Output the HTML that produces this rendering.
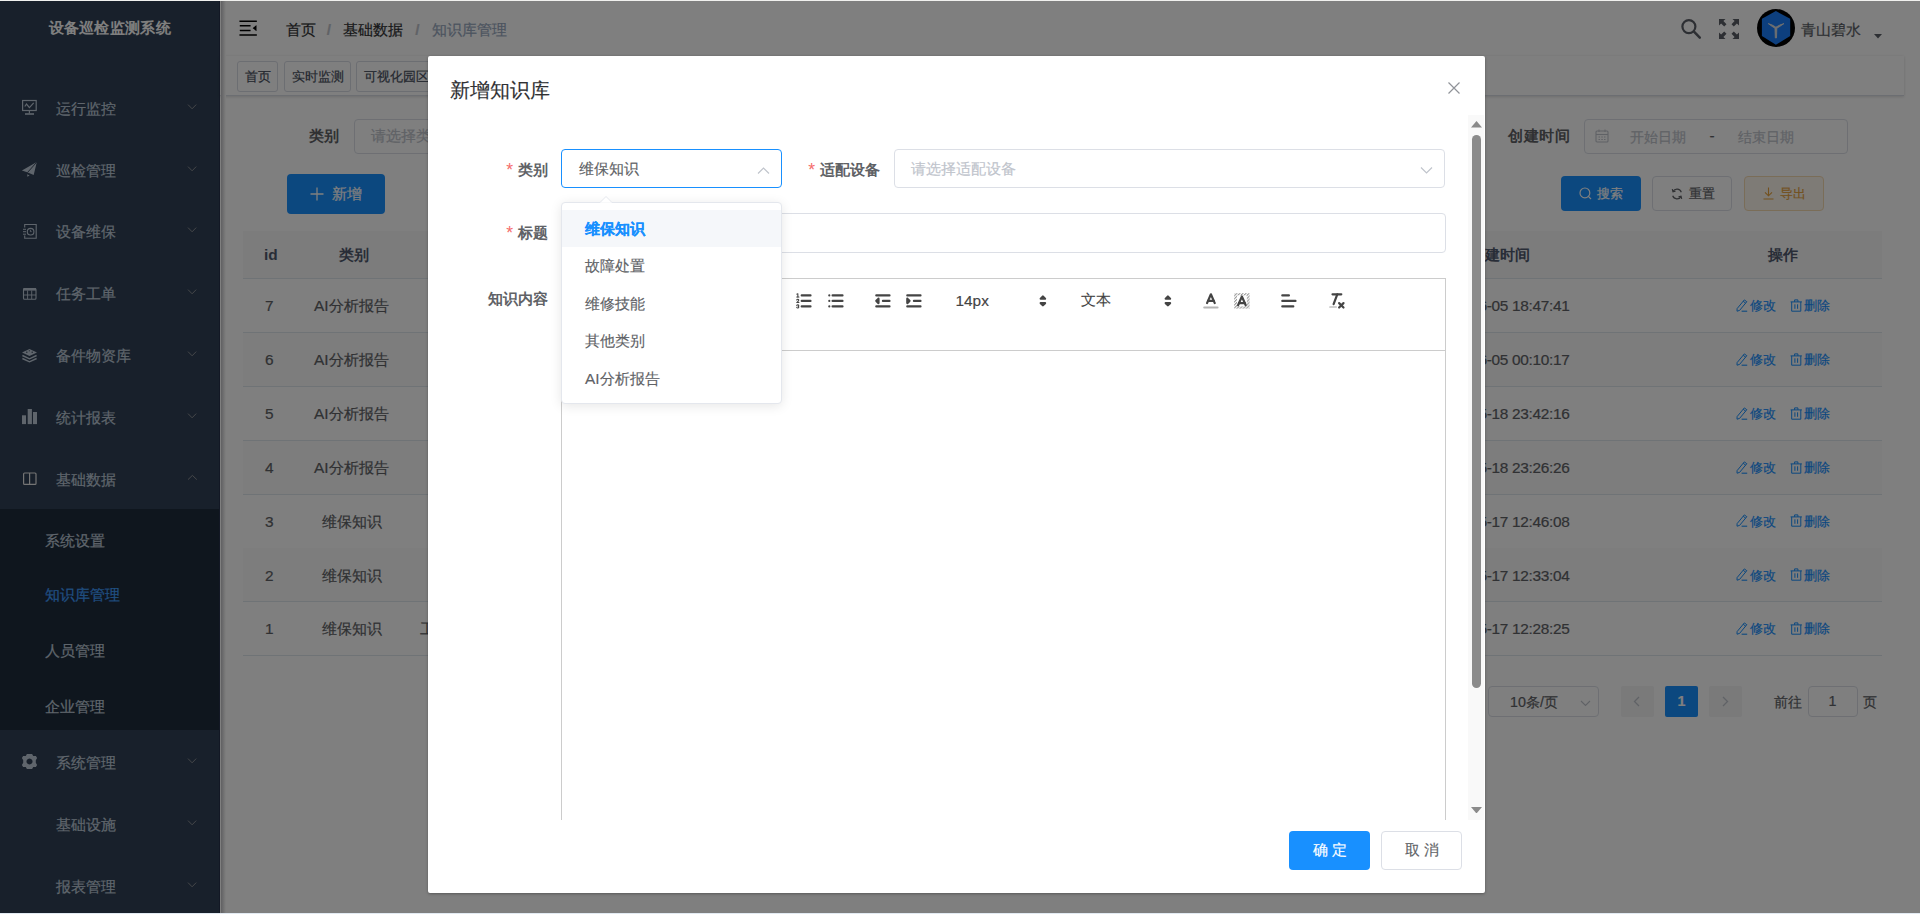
<!DOCTYPE html>
<html><head><meta charset="utf-8">
<style>
*{box-sizing:border-box;margin:0;padding:0}
html,body{width:1920px;height:914px;overflow:hidden;background:#fff;font-family:"Liberation Sans",sans-serif;color:#606266}
.a{position:absolute}
.t{position:absolute;white-space:nowrap;line-height:1}
/* sidebar */
#sb{position:absolute;left:0;top:0;width:220px;height:914px;background:#304156}
#sb .sub{position:absolute;left:0;top:509px;width:220px;height:221px;background:#1f2d3d}
#sb .mi{position:absolute;left:56px;font-size:15.4px;color:#bfcbd9;line-height:20px;height:20px}
#sb .si{position:absolute;left:45px;font-size:15.4px;color:#bfcbd9;line-height:20px;height:20px}
#sb .ic{position:absolute;left:22px}
#sb .chev{position:absolute;left:186px}
/* header */
#hd{position:absolute;left:220px;top:0;width:1700px;height:56px;background:#fff}
#tags{position:absolute;left:220px;top:56px;width:1684px;height:40px;background:#fff;border-bottom:1px solid #d8dce5;box-shadow:0 1px 3px 0 rgba(0,0,0,.12),0 0 3px 0 rgba(0,0,0,.04)}
.tag{position:absolute;top:5.3px;height:31px;border:1px solid #d8dce5;border-radius:3px;font-size:13.2px;color:#495060;line-height:30px;text-align:center;white-space:nowrap;background:#fff}
/* main */
.lbl{position:absolute;font-size:15.4px;font-weight:bold;color:#606266;line-height:20px}
.inp{position:absolute;border:1px solid #dcdfe6;border-radius:4px;background:#fff}
.ph{position:absolute;font-size:15.4px;color:#c0c4cc;line-height:20px;white-space:nowrap}
.btn{position:absolute;border-radius:4px;font-size:15.4px;line-height:20px;text-align:center;white-space:nowrap}
.row{position:absolute;left:243px;width:1639px;height:54px;border-bottom:1px solid #dfe6ec;background:#fff}
.row.st{background:#fafafa}
.cell{position:absolute;font-size:15.4px;color:#606266;line-height:20px;white-space:nowrap}
#pg{-webkit-text-stroke-width:0.2px}
#pg .lbl{-webkit-text-stroke-width:0}
#dlg{-webkit-text-stroke-width:0.15px}
#dlg .dl{-webkit-text-stroke-width:0}
#ovl{position:absolute;left:0;top:0;width:1920px;height:914px;background:rgba(0,0,0,.5)}
/* dialog */
#dlg{position:absolute;left:428px;top:56px;width:1057px;height:837px;background:#fff;border-radius:2px;box-shadow:0 1px 3px rgba(0,0,0,.3)}
.dl{position:absolute;font-size:15.4px;font-weight:bold;color:#606266;line-height:20px;white-space:nowrap}
.req{color:#f56c6c;font-weight:normal;margin-right:4.5px;font-size:17.5px;position:relative;top:1px}
.dd-item{position:absolute;left:0;width:218px;height:37.4px;font-size:15.4px;color:#606266;line-height:37.4px;padding-left:22.7px;white-space:nowrap}
</style></head><body>

<div id="pg">
<!-- SIDEBAR -->
<div id="sb">
  <div class="t" style="left:48.5px;top:20px;font-size:15.4px;font-weight:bold;color:#fff;letter-spacing:0.3px;-webkit-text-stroke-width:0;">设备巡检监测系统</div>
  <div class="sub"></div>
  <div class="mi" style="top:98.9px">运行监控</div>
  <svg class="chev" style="top:102.9px;left:187.2px" width="11" height="8" viewBox="0 0 11 8"><path d="M1 1.6 L5.1 5.8 L9.2 1.6" fill="none" stroke="#8b8e94" stroke-width="1"/></svg>
  <div class="mi" style="top:160.5px">巡检管理</div>
  <svg class="chev" style="top:164.5px;left:187.2px" width="11" height="8" viewBox="0 0 11 8"><path d="M1 1.6 L5.1 5.8 L9.2 1.6" fill="none" stroke="#8b8e94" stroke-width="1"/></svg>
  <div class="mi" style="top:222.0px">设备维保</div>
  <svg class="chev" style="top:226.0px;left:187.2px" width="11" height="8" viewBox="0 0 11 8"><path d="M1 1.6 L5.1 5.8 L9.2 1.6" fill="none" stroke="#8b8e94" stroke-width="1"/></svg>
  <div class="mi" style="top:284.0px">任务工单</div>
  <svg class="chev" style="top:288.0px;left:187.2px" width="11" height="8" viewBox="0 0 11 8"><path d="M1 1.6 L5.1 5.8 L9.2 1.6" fill="none" stroke="#8b8e94" stroke-width="1"/></svg>
  <div class="mi" style="top:346.0px">备件物资库</div>
  <svg class="chev" style="top:350.0px;left:187.2px" width="11" height="8" viewBox="0 0 11 8"><path d="M1 1.6 L5.1 5.8 L9.2 1.6" fill="none" stroke="#8b8e94" stroke-width="1"/></svg>
  <div class="mi" style="top:408.0px">统计报表</div>
  <svg class="chev" style="top:412.0px;left:187.2px" width="11" height="8" viewBox="0 0 11 8"><path d="M1 1.6 L5.1 5.8 L9.2 1.6" fill="none" stroke="#8b8e94" stroke-width="1"/></svg>
  <div class="mi" style="top:470.0px">基础数据</div>
  <svg class="chev" style="top:474.0px;left:187.2px" width="11" height="8" viewBox="0 0 11 8"><path d="M1 5.6 L5.4 1.4 L9.8 5.6" fill="none" stroke="#8b8e94" stroke-width="1"/></svg>
  <div class="si" style="top:530.7px;color:#bfcbd9">系统设置</div>
  <div class="si" style="top:585.0px;color:#409eff">知识库管理</div>
  <div class="si" style="top:641.4px;color:#bfcbd9">人员管理</div>
  <div class="si" style="top:696.6px;color:#bfcbd9">企业管理</div>
  <div class="mi" style="top:753.0px">系统管理</div>
  <svg class="chev" style="top:757.0px;left:187.2px" width="11" height="8" viewBox="0 0 11 8"><path d="M1 1.6 L5.1 5.8 L9.2 1.6" fill="none" stroke="#8b8e94" stroke-width="1"/></svg>
  <div class="mi" style="top:815.0px">基础设施</div>
  <svg class="chev" style="top:819.0px;left:187.2px" width="11" height="8" viewBox="0 0 11 8"><path d="M1 1.6 L5.1 5.8 L9.2 1.6" fill="none" stroke="#8b8e94" stroke-width="1"/></svg>
  <div class="mi" style="top:877.0px">报表管理</div>
  <svg class="chev" style="top:881.0px;left:187.2px" width="11" height="8" viewBox="0 0 11 8"><path d="M1 1.6 L5.1 5.8 L9.2 1.6" fill="none" stroke="#8b8e94" stroke-width="1"/></svg>
  <svg class="a" style="left:0;top:0" width="220" height="914" viewBox="0 0 220 914" fill="none" stroke="#bfcbd9">
    <!-- monitor -->
    <rect x="22.6" y="100.5" width="13.6" height="10" stroke-width="1.2"/>
    <polyline points="24.8,106.5 26.5,104 29.4,107.6 33.7,102.9" stroke-width="1.2"/>
    <line x1="29.4" y1="110.5" x2="29.4" y2="113.5" stroke-width="1.2"/>
    <line x1="25" y1="114" x2="34" y2="114" stroke-width="1.6"/>
    <!-- paper plane -->
    <path d="M36.8 162.1 L21.9 170.5 L27.2 172.3 L33.7 175 Z M27.2 172.3 L36.8 162.1" fill="#bfcbd9" stroke="none"/>
    <path d="M36.8 162.1 L27.5 172.5" stroke="#304156" stroke-width="0.9"/>
    <path d="M27.2 174.2 L29.6 175.4 L27.4 176.8 Z" fill="#bfcbd9" stroke="none"/>
    <!-- notebook clock -->
    <path d="M24.7 227.5 V224.5 H36.2 V238.2 H24.7 V235.5" stroke-width="1.1"/>
    <line x1="23" y1="229.3" x2="26" y2="229.3" stroke-width="1"/>
    <line x1="23" y1="231.7" x2="26" y2="231.7" stroke-width="1"/>
    <line x1="23" y1="234.2" x2="26" y2="234.2" stroke-width="1"/>
    <circle cx="30.6" cy="231.7" r="3.3" stroke-width="1.1"/>
    <path d="M30.4 229.8 V231.6 H31.6" stroke-width="0.9"/>
    <!-- table -->
    <rect x="23.5" y="288.5" width="12.5" height="10.8" rx="1" stroke-width="1.1"/>
    <rect x="23.5" y="288" width="12.5" height="2.6" fill="#bfcbd9" stroke="none"/>
    <line x1="23.5" y1="295" x2="36" y2="295" stroke-width="0.9"/>
    <line x1="27.6" y1="290.5" x2="27.6" y2="299" stroke-width="0.9"/>
    <line x1="31.7" y1="290.5" x2="31.7" y2="299" stroke-width="0.9"/>
    <!-- layers -->
    <path d="M29.5 349 L37 352.4 L29.5 356 L22 352.4 Z" fill="#bfcbd9" stroke="none"/>
    <path d="M22.4 355.5 L29.5 358.8 L36.6 355.5" stroke-width="1.4"/>
    <path d="M22.4 358.5 L29.5 361.8 L36.6 358.5" stroke-width="1.4"/>
    <path d="M26 352.2 h1.5 M31.5 352.2 h1.5 M29.3 350.3 v1" stroke="#304156" stroke-width="1"/>
    <!-- bars -->
    <rect x="22" y="415.3" width="4" height="8.8" fill="#bfcbd9" stroke="none"/>
    <rect x="27.7" y="409" width="4.2" height="15.1" fill="#bfcbd9" stroke="none"/>
    <rect x="33" y="412" width="4" height="12.1" fill="#bfcbd9" stroke="none"/>
    <!-- columns -->
    <rect x="23.6" y="473" width="12.4" height="11.4" rx="1" stroke-width="1.2" stroke="#e8e8e8"/>
    <line x1="29.6" y1="473" x2="29.6" y2="484.4" stroke-width="1.2" stroke="#e8e8e8"/>
  </svg>
  <svg class="a" style="left:21px;top:753px" width="17" height="17" viewBox="-8.5 -8.5 17 17">
    <path fill="#bfcbd9" fill-rule="evenodd" d="M-2.6 -7.4 L2.6 -7.4 L3.7 -5.4 L6.4 -5.4 L7.6 -3.5 L6.3 -1.3 L6.3 1.3 L7.6 3.5 L6.4 5.4 L3.7 5.4 L2.6 7.4 L-2.6 7.4 L-3.7 5.4 L-6.4 5.4 L-7.6 3.5 L-6.3 1.3 L-6.3 -1.3 L-7.6 -3.5 L-6.4 -5.4 L-3.7 -5.4 Z M0 -3 A3 3 0 1 0 0.01 -3 Z"/>
  </svg>
</div>

<!-- HEADER -->
<div id="hd">
  <div class="a" style="left:0;top:0;width:1700px;height:1px;background:#ccc"></div>
</div>
<svg class="a" style="left:236.8px;top:16.7px;transform:rotate(180deg)" width="22.3" height="22.3" viewBox="0 0 1024 1024"><path fill="#000" d="M408 442h480c4.4 0 8-3.6 8-8v-56c0-4.4-3.6-8-8-8H408c-4.4 0-8 3.6-8 8v56c0 4.4 3.6 8 8 8zm-8 204c0 4.4 3.6 8 8 8h480c4.4 0 8-3.6 8-8v-56c0-4.4-3.6-8-8-8H408c-4.4 0-8 3.6-8 8v56zm504-486H120c-4.4 0-8 3.6-8 8v56c0 4.4 3.6 8 8 8h784c4.4 0 8-3.6 8-8v-56c0-4.4-3.6-8-8-8zm0 632H120c-4.4 0-8 3.6-8 8v56c0 4.4 3.6 8 8 8h784c4.4 0 8-3.6 8-8v-56c0-4.4-3.6-8-8-8zM142.4 642.1L298.7 519a8.840 8.840 0 0 0 0-13.900L142.4 381.900c-5.800-4.600-14.400-.500-14.400 6.900v246.300a8.900 8.900 0 0 0 14.400 7z"/></svg>
<div class="t" style="left:285.5px;top:21.5px;font-size:15.4px;color:#303133">首页</div>
<div class="t" style="left:326.8px;top:21.5px;font-size:15.4px;color:#c0c4cc;font-weight:bold">/</div>
<div class="t" style="left:343.2px;top:21.5px;font-size:15.4px;color:#303133">基础数据</div>
<div class="t" style="left:415.2px;top:21.5px;font-size:15.4px;color:#c0c4cc;font-weight:bold">/</div>
<div class="t" style="left:431.5px;top:21.5px;font-size:15.4px;color:#97a8be">知识库管理</div>
<svg class="a" style="left:1678px;top:16px" width="26" height="26" viewBox="0 0 26 26">
  <circle cx="10.9" cy="10.6" r="6.5" fill="none" stroke="#5a5e66" stroke-width="2.2"/>
  <line x1="16.2" y1="15.9" x2="21.8" y2="21.6" stroke="#5a5e66" stroke-width="2.5" stroke-linecap="round"/>
</svg>
<svg class="a" style="left:1719px;top:18.8px" width="20" height="20" viewBox="0 0 20 20" fill="#5a5e66">
  <path d="M0 0 H6.5 L4.4 2.1 L7.5 5.2 L5.2 7.5 L2.1 4.4 L0 6.5 Z"/>
  <path d="M20 0 H13.5 L15.6 2.1 L12.5 5.2 L14.8 7.5 L17.9 4.4 L20 6.5 Z"/>
  <path d="M0 20 H6.5 L4.4 17.9 L7.5 14.8 L5.2 12.5 L2.1 15.6 L0 13.5 Z"/>
  <path d="M20 20 H13.5 L15.6 17.9 L12.5 14.8 L14.8 12.5 L17.9 15.6 L20 13.5 Z"/>
</svg>
<svg class="a" style="left:1757px;top:9px" width="38" height="38" viewBox="0 0 38 38">
  <circle cx="19" cy="19" r="19" fill="#000"/>
  <polygon points="18.9,2 33.2,9.8 33.2,27 18.9,35.8 4.9,27 4.9,9.8" fill="#1a7efc"/>
  <path d="M11.3 14.6 Q15.5 15.8 18.9 18.2 Q22.5 15.8 26.9 14.6 Q23 17.5 19.8 19.2 L19.5 28.9 L18.3 28.9 L18 19.2 Q14.8 17.5 11.3 14.6 Z" fill="#e0e0e0" stroke="#e0e0e0" stroke-width="0.9" stroke-linejoin="round"/>
</svg>
<div class="t" style="left:1801px;top:22px;font-size:15.4px;color:#5a5e66">青山碧水</div>
<svg class="a" style="left:1874px;top:33.5px" width="8" height="5" viewBox="0 0 8 5"><polygon points="0,0 8,0 4,4.5" fill="#5a5e66"/></svg>
<div id="tags">
  <div class="tag" style="left:17.4px;width:41px">首页</div>
  <div class="tag" style="left:64.4px;width:67px">实时监测</div>
  <div class="tag" style="left:136.4px;width:80px">可视化园区</div>
</div>
<div class="a" style="left:219px;top:0;width:1px;height:914px;background:#26304a"></div>
<div class="a" style="left:221px;top:0;width:5px;height:914px;background:linear-gradient(to right,#c0c0c4,#fff)"></div>

<!-- MAIN -->
<div id="main">
  <div class="lbl" style="left:309px;top:126px">类别</div>
  <div class="inp" style="left:353.5px;top:119px;width:250px;height:35px"></div>
  <div class="ph" style="left:370.5px;top:126px">请选择类别</div>
  <div class="btn" style="left:287px;top:174px;width:98px;height:40px;background:#1890ff;color:#fff;line-height:40px"><svg width="14" height="14" viewBox="0 0 14 14" style="vertical-align:-2px;margin-right:8px"><path d="M7 0.5 V13.5 M0.5 7 H13.5" stroke="#fff" stroke-width="1.3"/></svg>新增</div>

  <div class="lbl" style="left:1508px;top:126px;letter-spacing:0.5px">创建时间</div>
  <div class="inp" style="left:1583.5px;top:119px;width:264px;height:35px"></div>
  <svg class="a" style="left:1595px;top:129px" width="14" height="14" viewBox="0 0 14 14" fill="none" stroke="#c0c4cc" stroke-width="1.1"><rect x="1" y="2" width="12" height="11" rx="1"/><line x1="1" y1="5.5" x2="13" y2="5.5"/><line x1="4" y1="0.5" x2="4" y2="3"/><line x1="10" y1="0.5" x2="10" y2="3"/><path d="M3.5 8h1.5M6.3 8h1.5M9 8h1.5M3.5 10.5h1.5M6.3 10.5h1.5M9 10.5h1.5"/></svg>
  <div class="ph" style="left:1629.5px;top:126.5px;font-size:14.3px">开始日期</div>
  <div class="ph" style="left:1709.5px;top:126px;color:#606266">-</div>
  <div class="ph" style="left:1738px;top:126.5px;font-size:14.3px">结束日期</div>

  <div class="btn" style="left:1561px;top:176px;width:80px;height:35px;background:#1890ff;"></div>
  <svg class="a" style="left:1578.5px;top:187.2px" width="13" height="13" viewBox="0 0 13 13"><circle cx="5.9" cy="5.9" r="4.9" fill="none" stroke="#fff" stroke-width="1.2"/><line x1="9.4" y1="9.4" x2="12" y2="12" stroke="#fff" stroke-width="1.2"/></svg>
  <div class="t" style="left:1597px;top:186.5px;font-size:13.2px;color:#fff">搜索</div>
  <div class="btn" style="left:1652px;top:176px;width:80px;height:35px;background:#fff;border:1px solid #dcdfe6;"></div>
  <svg class="a" style="left:1670.5px;top:187.5px" width="12" height="12" viewBox="0 0 12 12" fill="none" stroke="#606266" stroke-width="1.2"><path d="M10.3 4.2 A4.6 4.6 0 0 0 2 3.4"/><path d="M1.7 7.8 A4.6 4.6 0 0 0 10 8.6"/><path d="M1.3 1.2 L2 3.8 L4.5 3.2"/><path d="M10.7 10.8 L10 8.2 L7.5 8.8"/></svg>
  <div class="t" style="left:1688.5px;top:186.5px;font-size:13.2px;color:#606266">重置</div>
  <div class="btn" style="left:1744px;top:176px;width:80px;height:35px;background:#fdf6ec;border:1px solid #f5dab1;"></div>
  <svg class="a" style="left:1762.5px;top:186.5px" width="11" height="13" viewBox="0 0 11 13" fill="none" stroke="#e6a23c" stroke-width="1.1"><path d="M5.5 0.5 V8.6 M2 5.3 L5.5 8.8 L9 5.3 M0.5 12 H10.5"/></svg>
  <div class="t" style="left:1779.5px;top:186.5px;font-size:13.2px;color:#e6a23c">导出</div>

  <div class="a" style="left:243px;top:231px;width:1639px;height:48px;background:#f8f8f9;border-bottom:1px solid #dfe6ec"></div>
  <div class="lbl" style="left:264px;top:245px;color:#515a6e">id</div>
  <div class="lbl" style="left:339px;top:245px;color:#515a6e">类别</div>
  <div class="lbl" style="left:1470px;top:245px;color:#515a6e">创建时间</div>
  <div class="lbl" style="left:1768px;top:245px;color:#515a6e">操作</div>
  <div class="row" style="top:279.20px"></div>
  <div class="cell" style="left:265px;top:296.2px">7</div>
  <div class="cell" style="left:314.0px;top:296.2px">AI分析报告</div>
  <div class="cell" style="right:350.5px;top:296.2px;letter-spacing:-0.3px">2024-06-05 18:47:41</div>
  <svg class="a" style="left:1736px;top:298.9px" width="12" height="13" viewBox="0 0 12 13" fill="none" stroke="#1890ff" stroke-width="1"><path d="M8.3 0.9 L10.8 2.7 L3.6 11.4 L1 12.2 L1.1 9.6 Z"/><path d="M7.2 2.3 L9.6 4.1"/><path d="M5.6 12.2 H11.2" stroke-width="1.1"/></svg><div class="cell" style="left:1750.3px;top:296.2px;color:#1890ff;font-size:13.2px">修改</div><svg class="a" style="left:1790px;top:298.9px" width="12.5" height="13" viewBox="0 0 12.5 13" fill="none" stroke="#1890ff" stroke-width="1"><path d="M0.6 2.9 H11.9 M4.6 2.9 V0.9 H7.9 V2.9 M1.7 2.9 V12.2 H10.8 V2.9 M4.9 5.3 V9.8 M7.6 5.3 V9.8"/></svg><div class="cell" style="left:1804px;top:296.2px;color:#1890ff;font-size:13.2px">删除</div>
  <div class="row st" style="top:333.05px"></div>
  <div class="cell" style="left:265px;top:350.1px">6</div>
  <div class="cell" style="left:314.0px;top:350.1px">AI分析报告</div>
  <div class="cell" style="right:350.5px;top:350.1px;letter-spacing:-0.3px">2024-06-05 00:10:17</div>
  <svg class="a" style="left:1736px;top:352.8px" width="12" height="13" viewBox="0 0 12 13" fill="none" stroke="#1890ff" stroke-width="1"><path d="M8.3 0.9 L10.8 2.7 L3.6 11.4 L1 12.2 L1.1 9.6 Z"/><path d="M7.2 2.3 L9.6 4.1"/><path d="M5.6 12.2 H11.2" stroke-width="1.1"/></svg><div class="cell" style="left:1750.3px;top:350.1px;color:#1890ff;font-size:13.2px">修改</div><svg class="a" style="left:1790px;top:352.8px" width="12.5" height="13" viewBox="0 0 12.5 13" fill="none" stroke="#1890ff" stroke-width="1"><path d="M0.6 2.9 H11.9 M4.6 2.9 V0.9 H7.9 V2.9 M1.7 2.9 V12.2 H10.8 V2.9 M4.9 5.3 V9.8 M7.6 5.3 V9.8"/></svg><div class="cell" style="left:1804px;top:350.1px;color:#1890ff;font-size:13.2px">删除</div>
  <div class="row" style="top:386.90px"></div>
  <div class="cell" style="left:265px;top:403.9px">5</div>
  <div class="cell" style="left:314.0px;top:403.9px">AI分析报告</div>
  <div class="cell" style="right:350.5px;top:403.9px;letter-spacing:-0.3px">2024-05-18 23:42:16</div>
  <svg class="a" style="left:1736px;top:406.6px" width="12" height="13" viewBox="0 0 12 13" fill="none" stroke="#1890ff" stroke-width="1"><path d="M8.3 0.9 L10.8 2.7 L3.6 11.4 L1 12.2 L1.1 9.6 Z"/><path d="M7.2 2.3 L9.6 4.1"/><path d="M5.6 12.2 H11.2" stroke-width="1.1"/></svg><div class="cell" style="left:1750.3px;top:403.9px;color:#1890ff;font-size:13.2px">修改</div><svg class="a" style="left:1790px;top:406.6px" width="12.5" height="13" viewBox="0 0 12.5 13" fill="none" stroke="#1890ff" stroke-width="1"><path d="M0.6 2.9 H11.9 M4.6 2.9 V0.9 H7.9 V2.9 M1.7 2.9 V12.2 H10.8 V2.9 M4.9 5.3 V9.8 M7.6 5.3 V9.8"/></svg><div class="cell" style="left:1804px;top:403.9px;color:#1890ff;font-size:13.2px">删除</div>
  <div class="row st" style="top:440.75px"></div>
  <div class="cell" style="left:265px;top:457.8px">4</div>
  <div class="cell" style="left:314.0px;top:457.8px">AI分析报告</div>
  <div class="cell" style="right:350.5px;top:457.8px;letter-spacing:-0.3px">2024-05-18 23:26:26</div>
  <svg class="a" style="left:1736px;top:460.5px" width="12" height="13" viewBox="0 0 12 13" fill="none" stroke="#1890ff" stroke-width="1"><path d="M8.3 0.9 L10.8 2.7 L3.6 11.4 L1 12.2 L1.1 9.6 Z"/><path d="M7.2 2.3 L9.6 4.1"/><path d="M5.6 12.2 H11.2" stroke-width="1.1"/></svg><div class="cell" style="left:1750.3px;top:457.8px;color:#1890ff;font-size:13.2px">修改</div><svg class="a" style="left:1790px;top:460.5px" width="12.5" height="13" viewBox="0 0 12.5 13" fill="none" stroke="#1890ff" stroke-width="1"><path d="M0.6 2.9 H11.9 M4.6 2.9 V0.9 H7.9 V2.9 M1.7 2.9 V12.2 H10.8 V2.9 M4.9 5.3 V9.8 M7.6 5.3 V9.8"/></svg><div class="cell" style="left:1804px;top:457.8px;color:#1890ff;font-size:13.2px">删除</div>
  <div class="row" style="top:494.60px"></div>
  <div class="cell" style="left:265px;top:511.6px">3</div>
  <div class="cell" style="left:322.0px;top:511.6px">维保知识</div>
  <div class="cell" style="right:350.5px;top:511.6px;letter-spacing:-0.3px">2024-05-17 12:46:08</div>
  <svg class="a" style="left:1736px;top:514.3px" width="12" height="13" viewBox="0 0 12 13" fill="none" stroke="#1890ff" stroke-width="1"><path d="M8.3 0.9 L10.8 2.7 L3.6 11.4 L1 12.2 L1.1 9.6 Z"/><path d="M7.2 2.3 L9.6 4.1"/><path d="M5.6 12.2 H11.2" stroke-width="1.1"/></svg><div class="cell" style="left:1750.3px;top:511.6px;color:#1890ff;font-size:13.2px">修改</div><svg class="a" style="left:1790px;top:514.3px" width="12.5" height="13" viewBox="0 0 12.5 13" fill="none" stroke="#1890ff" stroke-width="1"><path d="M0.6 2.9 H11.9 M4.6 2.9 V0.9 H7.9 V2.9 M1.7 2.9 V12.2 H10.8 V2.9 M4.9 5.3 V9.8 M7.6 5.3 V9.8"/></svg><div class="cell" style="left:1804px;top:511.6px;color:#1890ff;font-size:13.2px">删除</div>
  <div class="row st" style="top:548.45px"></div>
  <div class="cell" style="left:265px;top:565.5px">2</div>
  <div class="cell" style="left:322.0px;top:565.5px">维保知识</div>
  <div class="cell" style="right:350.5px;top:565.5px;letter-spacing:-0.3px">2024-05-17 12:33:04</div>
  <svg class="a" style="left:1736px;top:568.2px" width="12" height="13" viewBox="0 0 12 13" fill="none" stroke="#1890ff" stroke-width="1"><path d="M8.3 0.9 L10.8 2.7 L3.6 11.4 L1 12.2 L1.1 9.6 Z"/><path d="M7.2 2.3 L9.6 4.1"/><path d="M5.6 12.2 H11.2" stroke-width="1.1"/></svg><div class="cell" style="left:1750.3px;top:565.5px;color:#1890ff;font-size:13.2px">修改</div><svg class="a" style="left:1790px;top:568.2px" width="12.5" height="13" viewBox="0 0 12.5 13" fill="none" stroke="#1890ff" stroke-width="1"><path d="M0.6 2.9 H11.9 M4.6 2.9 V0.9 H7.9 V2.9 M1.7 2.9 V12.2 H10.8 V2.9 M4.9 5.3 V9.8 M7.6 5.3 V9.8"/></svg><div class="cell" style="left:1804px;top:565.5px;color:#1890ff;font-size:13.2px">删除</div>
  <div class="row" style="top:602.30px"></div>
  <div class="cell" style="left:265px;top:619.3px">1</div>
  <div class="cell" style="left:322.0px;top:619.3px">维保知识</div>
  <div class="cell" style="right:350.5px;top:619.3px;letter-spacing:-0.3px">2024-05-17 12:28:25</div>
  <svg class="a" style="left:1736px;top:622.0px" width="12" height="13" viewBox="0 0 12 13" fill="none" stroke="#1890ff" stroke-width="1"><path d="M8.3 0.9 L10.8 2.7 L3.6 11.4 L1 12.2 L1.1 9.6 Z"/><path d="M7.2 2.3 L9.6 4.1"/><path d="M5.6 12.2 H11.2" stroke-width="1.1"/></svg><div class="cell" style="left:1750.3px;top:619.3px;color:#1890ff;font-size:13.2px">修改</div><svg class="a" style="left:1790px;top:622.0px" width="12.5" height="13" viewBox="0 0 12.5 13" fill="none" stroke="#1890ff" stroke-width="1"><path d="M0.6 2.9 H11.9 M4.6 2.9 V0.9 H7.9 V2.9 M1.7 2.9 V12.2 H10.8 V2.9 M4.9 5.3 V9.8 M7.6 5.3 V9.8"/></svg><div class="cell" style="left:1804px;top:619.3px;color:#1890ff;font-size:13.2px">删除</div>
  <div class="cell" style="left:420px;top:619px">工艺规范</div>

  <div class="inp" style="left:1488px;top:686px;width:110.5px;height:30.5px"></div>
  <div class="cell" style="left:1510px;top:692px;font-size:14.3px">10条/页</div>
  <svg class="a" style="left:1580px;top:699.6px" width="11" height="7" viewBox="0 0 11 7"><path d="M1 1 L5.5 5.5 L10 1" fill="none" stroke="#c0c4cc" stroke-width="1.1"/></svg>
  <div class="a" style="left:1620.7px;top:686px;width:33px;height:30.5px;background:#f4f4f5;border-radius:2px"></div>
  <svg class="a" style="left:1633px;top:696px" width="7" height="11" viewBox="0 0 7 11"><path d="M6 1 L1.5 5.5 L6 10" fill="none" stroke="#c0c4cc" stroke-width="1.3"/></svg>
  <div class="a" style="left:1665px;top:686px;width:33px;height:30.5px;background:#1890ff;border-radius:2px;color:#fff;font-size:14.3px;font-weight:bold;text-align:center;line-height:30.5px">1</div>
  <div class="a" style="left:1708.7px;top:686px;width:33.5px;height:30.5px;background:#f4f4f5;border-radius:2px"></div>
  <svg class="a" style="left:1722px;top:696px" width="7" height="11" viewBox="0 0 7 11"><path d="M1 1 L5.5 5.5 L1 10" fill="none" stroke="#c0c4cc" stroke-width="1.3"/></svg>
  <div class="cell" style="left:1774px;top:692px;font-size:14.3px">前往</div>
  <div class="inp" style="left:1807.5px;top:686px;width:50px;height:30.5px;text-align:center;font-size:14.3px;line-height:28px;color:#606266">1</div>
  <div class="cell" style="left:1863px;top:692px;font-size:14.3px">页</div>
</div>

</div>
<div id="ovl"></div>
<div class="a" style="left:0;top:0;width:1920px;height:1px;background:#f0f0ee"></div>
<div class="a" style="left:0;top:913px;width:1920px;height:1px;background:#e2eaf2"></div>

<!-- DIALOG -->
<div id="dlg">
  <div class="t" style="left:22px;top:25px;font-size:19.8px;color:#303133">新增知识库</div>
  <svg class="a" style="left:1020px;top:25.5px" width="12" height="12" viewBox="0 0 12 12"><path d="M0.5 0.5 L11.5 11.5 M11.5 0.5 L0.5 11.5" stroke="#909399" stroke-width="1.2"/></svg>
  <div class="a" style="left:0;top:60px;width:1057px;height:704px;overflow:hidden">
    <div class="dl" style="right:937.5px;top:43.0px"><span class="req">*</span>类别</div>
    <div class="dl" style="right:605.5px;top:43.0px"><span class="req">*</span>适配设备</div>
    <div class="dl" style="right:937.5px;top:106.3px"><span class="req">*</span>标题</div>
    <div class="dl" style="right:937.5px;top:172.7px">知识内容</div>
    <div class="inp" style="left:133.4px;top:33.3px;width:220.5px;height:38.8px;border-color:#1890ff"></div>
    <div class="t" style="left:150.5px;top:45.0px;font-size:15.4px;color:#606266;line-height:16px">维保知识</div>
    <svg class="a" style="left:328.5px;top:49.5px" width="13" height="9" viewBox="0 0 13 9"><path d="M1 7.5 L6.5 2 L12 7.5" fill="none" stroke="#c0c4cc" stroke-width="1.2"/></svg>
    <div class="inp" style="left:465.5px;top:33.3px;width:551.5px;height:38.8px"></div>
    <div class="t" style="left:482.5px;top:45.0px;font-size:15.4px;color:#c0c4cc;line-height:16px">请选择适配设备</div>
    <svg class="a" style="left:991.5px;top:50.0px" width="13" height="9" viewBox="0 0 13 9"><path d="M1 1.5 L6.5 7 L12 1.5" fill="none" stroke="#c0c4cc" stroke-width="1.2"/></svg>
    <div class="inp" style="left:133.4px;top:97.4px;width:884.5px;height:39.2px"></div>
    <div class="a" style="left:133.4px;top:162.4px;width:884.5px;height:72.5px;border:1px solid #ccc"></div>
    <div class="a" style="left:133.4px;top:234.4px;width:884.5px;height:600px;border:1px solid #ccc;border-top:0"></div>
  </div>
<svg class="a" style="left:366.4px;top:234.8px" width="19.8" height="19.8" viewBox="0 0 18 18"><g fill="none" stroke="#444" stroke-width="2" stroke-linecap="round" stroke-linejoin="round"><line x1="7" x2="15" y1="4" y2="4"/><line x1="7" x2="15" y1="9" y2="9"/><line x1="7" x2="15" y1="14" y2="14"/><line stroke-width="1" x1="2.5" x2="4.5" y1="5.5" y2="5.5"/><path stroke-width="1" d="M4.5,10.5h-2c0-.234,1.85-1.076,1.85-2.234A0.959,0.959,0,0,0,2.5,8.156"/><path stroke-width="1" d="M2.5,14.846a0.959,0.959,0,0,0,1.85-.109A0.7,0.7,0,0,0,3.75,14a0.688,0.688,0,0,0,.6-0.736,0.959,0.959,0,0,0-1.85-.109"/></g><path fill="#444" d="M3.5,6A0.5,0.5,0,0,1,3,5.5V3.085l-0.276.138A0.5,0.5,0,0,1,2.053,3c-0.124-.247-0.023-0.324.224-0.447l1-.5A0.5,0.5,0,0,1,4,2.5v3A0.5,0.5,0,0,1,3.5,6Z"/></svg>
<svg class="a" style="left:397.8px;top:234.8px" width="19.8" height="19.8" viewBox="0 0 18 18"><g fill="none" stroke="#444" stroke-width="2" stroke-linecap="round" stroke-linejoin="round"><line x1="6" x2="15" y1="4" y2="4"/><line x1="6" x2="15" y1="9" y2="9"/><line x1="6" x2="15" y1="14" y2="14"/><line x1="3" x2="3" y1="4" y2="4"/><line x1="3" x2="3" y1="9" y2="9"/><line x1="3" x2="3" y1="14" y2="14"/></g></svg>
<svg class="a" style="left:444.6px;top:234.8px" width="19.8" height="19.8" viewBox="0 0 18 18"><g fill="none" stroke="#444" stroke-width="2" stroke-linecap="round" stroke-linejoin="round"><line x1="3" x2="15" y1="14" y2="14"/><line x1="3" x2="15" y1="4" y2="4"/><line x1="9" x2="15" y1="9" y2="9"/><polyline fill="#444" points="5 7 5 11 3 9 5 7"/></g></svg>
<svg class="a" style="left:475.7px;top:234.8px" width="19.8" height="19.8" viewBox="0 0 18 18"><g fill="none" stroke="#444" stroke-width="2" stroke-linecap="round" stroke-linejoin="round"><line x1="3" x2="15" y1="14" y2="14"/><line x1="3" x2="15" y1="4" y2="4"/><line x1="9" x2="15" y1="9" y2="9"/><polyline fill="#444" points="3 7 3 11 5 9 3 7"/></g></svg>
  <div class="t" style="left:527.5px;top:236.5px;font-size:15.4px;color:#444;font-weight:500">14px</div>
<svg class="a" style="left:604.8px;top:234.8px" width="19.8" height="19.8" viewBox="0 0 18 18"><g fill="none" stroke="#444" stroke-width="2" stroke-linecap="round" stroke-linejoin="round"><polygon fill="#444" points="7 11 9 13 11 11 7 11"/><polygon fill="#444" points="7 7 9 5 11 7 7 7"/></g></svg>
  <div class="t" style="left:652.5px;top:236.0px;font-size:15.4px;color:#444">文本</div>
<svg class="a" style="left:729.8px;top:234.8px" width="19.8" height="19.8" viewBox="0 0 18 18"><g fill="none" stroke="#444" stroke-width="2" stroke-linecap="round" stroke-linejoin="round"><polygon fill="#444" points="7 11 9 13 11 11 7 11"/><polygon fill="#444" points="7 7 9 5 11 7 7 7"/></g></svg>
<svg class="a" style="left:773.2px;top:235.1px" width="19.8" height="19.8" viewBox="0 0 18 18"><g fill="none" stroke="#444" stroke-width="2" stroke-linecap="round" stroke-linejoin="round"><line opacity="0.4" x1="3" x2="15" y1="15" y2="15"/><polyline points="5.5 11 9 3 12.5 11"/><line x1="11.63" x2="6.38" y1="9" y2="9"/></g></svg>
<svg class="a" style="left:803.8px;top:234.8px" width="19.8" height="19.8" viewBox="0 0 18 18"><defs><pattern id="hp" width="2" height="2" patternUnits="userSpaceOnUse" patternTransform="rotate(45)"><rect width="1" height="2" fill="#444"/></pattern></defs><rect x="2" y="2" width="14" height="14" fill="url(#hp)" opacity="0.55"/><rect x="4.5" y="4" width="9" height="10" fill="#fff"/><g fill="none" stroke="#444" stroke-width="2" stroke-linecap="round" stroke-linejoin="round"><polyline points="5.5 13 9 5 12.5 13"/><line x1="11.63" x2="6.38" y1="11" y2="11"/></g></svg>
<svg class="a" style="left:850.8px;top:234.8px" width="19.8" height="19.8" viewBox="0 0 18 18"><g fill="none" stroke="#444" stroke-width="2" stroke-linecap="round" stroke-linejoin="round"><line x1="3" x2="15" y1="9" y2="9"/><line x1="3" x2="13" y1="14" y2="14"/><line x1="3" x2="9" y1="4" y2="4"/></g></svg>
<svg class="a" style="left:898.8px;top:234.8px" width="19.8" height="19.8" viewBox="0 0 18 18"><g fill="none" stroke="#444" stroke-width="2" stroke-linecap="round" stroke-linejoin="round"><line x1="5" x2="13" y1="3" y2="3"/><line x1="6" x2="9.35" y1="12" y2="3"/><line x1="11" x2="15" y1="11" y2="15"/><line x1="15" x2="11" y1="11" y2="15"/></g><rect fill="#444" opacity="0.5" height="1" rx="0.5" ry="0.5" width="7" x="2" y="14"/></svg>
  <div class="a" style="left:1040px;top:59.2px;width:15.7px;height:704.6px;background:#f9f9f9"></div>
  <svg class="a" style="left:1043px;top:65px" width="11" height="6.5" viewBox="0 0 11 6.5"><polygon points="5.5,0 11,6.5 0,6.5" fill="#8b8b8b"/></svg>
  <div class="a" style="left:1044.2px;top:79.1px;width:9px;height:552.9px;background:#8b8b8b;border-radius:4.5px"></div>
  <svg class="a" style="left:1043px;top:750.5px" width="11" height="6.5" viewBox="0 0 11 6.5"><polygon points="0,0 11,0 5.5,6.5" fill="#8b8b8b"/></svg>
  <div class="btn" style="left:861.3px;top:775.2px;width:80.7px;height:38.5px;background:#1890ff;color:#fff;line-height:38.5px;letter-spacing:0">确 定</div>
  <div class="btn" style="left:953.2px;top:775.2px;width:81.3px;height:38.5px;background:#fff;border:1px solid #dcdfe6;color:#606266;line-height:36.5px">取 消</div>
  <div class="a" style="left:133.4px;top:146.0px;width:220.5px;height:201.8px;background:#fff;border:1px solid #e4e7ed;border-radius:4px;box-shadow:0 2px 12px 0 rgba(0,0,0,.1)">
    <div class="a" style="left:0;top:7px;width:218.5px;height:37.2px;background:#f5f7fa"></div>
    <div class="dd-item" style="top:7.0px;color:#1890ff;font-weight:bold;">维保知识</div>
    <div class="dd-item" style="top:44.4px;">故障处置</div>
    <div class="dd-item" style="top:81.8px;">维修技能</div>
    <div class="dd-item" style="top:119.2px;">其他类别</div>
    <div class="dd-item" style="top:156.6px;">AI分析报告</div>
  </div>
  <svg class="a" style="left:172.3px;top:140px" width="12" height="7" viewBox="0 0 12 7"><path d="M0 6.5 L6 0.5 L12 6.5" fill="#fff" stroke="#e4e7ed" stroke-width="1"/><rect x="0.5" y="6.5" width="11" height="1" fill="#fff"/></svg>
</div>

</body></html>
